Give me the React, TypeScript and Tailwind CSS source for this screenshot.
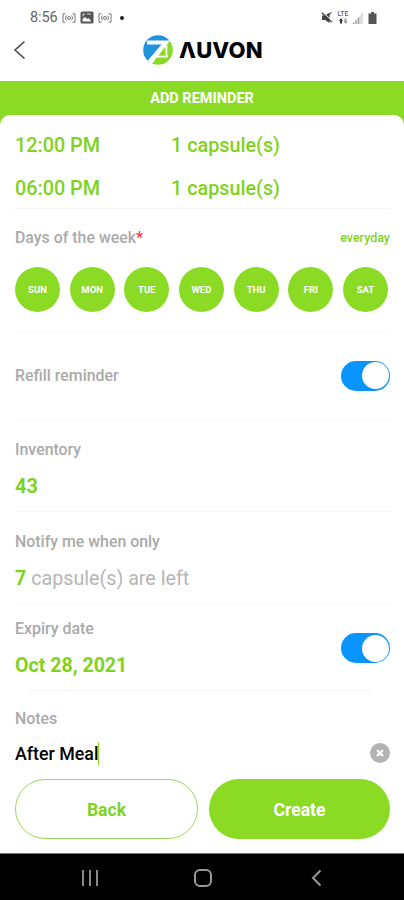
import type { ReactNode } from 'react';

const days = ['SUN', 'MON', 'TUE', 'WED', 'THU', 'FRI', 'SAT'];

const doses = [
  { time: '12:00 PM', amount: '1 capsule(s)' },
  { time: '06:00 PM', amount: '1 capsule(s)' },
];

function StatusBar() {
  return (
    <div className="flex h-[34px] items-center justify-between pl-[30px] pr-[27px] pt-[1px] text-[#666]">
      <div className="flex items-center">
        <span className="w-[28px] pt-[2px] text-[14.5px] leading-none tracking-[-0.1px]">8:56</span>
        <Broadcast className="ml-[4px]" />
        <svg className="ml-[4px]" width="14" height="13" viewBox="0 0 14 13">
          <rect x="0.5" y="0.5" width="13" height="12" rx="1.5" fill="#555" />
          <path d="M2.500 10.500V8L5 6l2 2 1.500-1 3 3.500z" fill="#fff" />
          <path d="M3 5.500V3h2M7 3h4" stroke="#ddd" fill="none" />
        </svg>
        <Broadcast className="ml-[4px]" />
        <span className="ml-[8px] size-[4px] rounded-full bg-[#222]" />
      </div>
      <div className="flex items-center">
        <svg width="12" height="13" viewBox="0 0 12 13" fill="none" stroke="#444">
          <path d="M1 4.500h3L8.500 1.500v10.500L4 9H1z" fill="#444" stroke="none" />
          <path d="M1.600 0.800l10 9.500" stroke="#fff" strokeWidth="1" />
          <path d="M0.800 1.800l10 9.500" strokeWidth="1.300" />
          <path d="M8.500 4L10.500 1" strokeWidth="1" />
        </svg>
        <div className="ml-[3px] flex w-[14px] flex-col items-center">
          <span className="text-[7px] font-medium leading-[7px]">LTE</span>
          <svg width="10" height="6" viewBox="0 0 10 6">
            <path d="M3 0l2 3H4v2.500H2V3H1z" fill="#333" />
            <path d="M7.500 6l2-3h-1V0.500h-2V3h-1z" fill="#999" />
          </svg>
        </div>
        <svg className="ml-[2px]" width="11" height="12" viewBox="0 0 11 12">
          <path d="M0 12L11 0v12z" fill="#ddd" />
          <path d="M1.500 11v1M4 8.500V12M6.500 6v6" stroke="#999" />
        </svg>
        <svg className="ml-[5px]" width="9" height="12" viewBox="0 0 9 12">
          <path d="M3 0h3v1.500h2.500V12h-8V1.500H3z" fill="#555" />
        </svg>
      </div>
    </div>
  );
}

function Broadcast({ className }: { className: string }) {
  return (
    <svg className={className} width="14" height="10" viewBox="0 0 14 10" fill="none" stroke="#777">
      <path d="M3.500 0.800H1v8.400h2.500M10.500 0.800H13v8.400h-2.500M4.500 2.500c-1.200 1.500-1.200 3.500 0 5M9.500 2.500c1.200 1.500 1.200 3.500 0 5" />
      <circle cx="7" cy="5" r="1.500" />
    </svg>
  );
}

function Header() {
  return (
    <header className="flex h-[47px] items-start pl-[13px] pt-[1px]">
      <svg className="mt-[5px]" width="13" height="20" viewBox="0 0 13 20" fill="none" stroke="#444" strokeWidth="1.500">
        <path d="M11.500 1.500L2 10l9.500 8.500" />
      </svg>
      <div className="ml-[116px] flex h-[30px] items-center">
        <svg width="32" height="30" viewBox="0 0 32 30">
          <clipPath id="disc">
            <circle cx="16" cy="15" r="14.800" />
          </clipPath>
          <g clipPath="url(#disc)">
            <path d="M0 0h32L6 30H0z" fill="#1f93dc" />
            <path d="M32 6v24H9L27 6z" fill="#8bdb24" />
            <path d="M5 5.500H28L10 28.500 5 26.500 19.500 9.500H5z" fill="#fff" />
            <path d="M24.300 10v10.500M15 21.500h11" stroke="#fff" strokeWidth="2" fill="none" />
            <path d="M23.300 13.500v7h-5.500z" fill="#8bdb24" />
          </g>
        </svg>
        <span className="ml-[5px] font-['Inter',sans-serif] text-[22px] font-extrabold leading-none tracking-[0.2px] text-black">
          ΛUVON
        </span>
      </div>
    </header>
  );
}

function Toggle() {
  return (
    <span className="flex h-[30px] w-[49px] items-center justify-end rounded-full bg-[#0a94fd] p-[1px]">
      <span className="size-[27px] rounded-full bg-white" />
    </span>
  );
}

function Label({ children }: { children: ReactNode }) {
  return <div className="text-[15.9px] font-medium leading-[20px] text-[#aaa]">{children}</div>;
}

export default function App() {
  return (
    <main className="flex h-[900px] w-[404px] flex-col overflow-hidden bg-white font-['Roboto',sans-serif]">
      <StatusBar />
      <Header />

      <div className="h-[44px] bg-[#8bdb24] pt-[7px] text-center text-[14.5px] font-bold leading-[22px] text-white">
        ADD REMINDER
      </div>

      <div className="-mt-[10px] flex flex-1 flex-col rounded-t-[10px] bg-white pl-[15px] pr-[14px]">
        {/* Doses */}
        <div className="flex h-[94px] flex-col justify-end gap-[19px] border-b border-[#f3f3f3] pb-[7px]">
          {doses.map((dose) => (
            <div key={dose.time} className="flex text-[19.8px] font-medium leading-[24px] text-[#7fd320]">
              <span className="w-[156px]">{dose.time}</span>
              <span>{dose.amount}</span>
            </div>
          ))}
        </div>

        {/* Days */}
        <div className="h-[123px] border-b border-[#f8f8f8] pt-[19px]">
          <div className="flex items-center justify-between">
            <Label>
              Days of the week<span className="text-[#ff3b3b]">*</span>
            </Label>
            <span className="text-[12.5px] font-medium leading-[20px] text-[#7fd320]">everyday</span>
          </div>
          <div className="mt-[19px] flex justify-between pr-[2px]">
            {days.map((day) => (
              <span
                key={day}
                className="flex size-[45px] items-center justify-center rounded-full bg-[#8bdb24] pt-[2px] text-[9.5px] font-bold text-white"
              >
                {day}
              </span>
            ))}
          </div>
        </div>

        {/* Refill */}
        <div className="flex h-[88px] items-center justify-between border-b border-[#f5f5f5]">
          <Label>Refill reminder</Label>
          <Toggle />
        </div>

        <div className="h-[92px] border-b border-[#f5f5f5] pt-[20px]">
          <Label>Inventory</Label>
          <div className="mt-[14px] text-[20px] font-bold leading-[24px] text-[#7fd320]">43</div>
        </div>

        <div className="h-[92px] border-b border-[#f5f5f5] pt-[20px]">
          <Label>Notify me when only</Label>
          <div className="mt-[15px] text-[19.7px] leading-[24px] text-[#b5b5b5]">
            <span className="font-bold text-[#7fd320]">7</span> capsule(s) are left
          </div>
        </div>

        <div className="flex h-[86px] items-start justify-between pt-[15px]">
          <div>
            <Label>Expiry date</Label>
            <div className="mt-[15px] text-[19.6px] font-bold leading-[24px] text-[#7fd320]">Oct 28, 2021</div>
          </div>
          <div className="pt-[14px]">
            <Toggle />
          </div>
        </div>
        <div className="ml-[13px] mr-[18px] h-px bg-[#f5f5f5]" />

        {/* Notes */}
        <div className="h-[88px] pt-[18px]">
          <Label>Notes</Label>
          <div className="mt-[12px] flex items-center justify-between">
            <div className="flex items-center text-[17.8px] font-medium leading-[22px] text-black">
              <span className="pt-[2px]">After Meal</span>
              <span className="h-[23px] w-px bg-[#8bdb24]" />
            </div>
            <svg width="20" height="20" viewBox="0 0 20 20">
              <circle cx="10" cy="10" r="10" fill="#b3b3b3" />
              <path d="M7 7l6 6M13 7l-6 6" stroke="#fff" strokeWidth="2.200" />
            </svg>
          </div>
        </div>

        <div className="flex gap-[11px] text-[17.6px] font-bold">
          <button className="h-[60px] flex-1 rounded-full border border-[#9bd85a] pt-[2px] text-[#7fd320]">Back</button>
          <button className="h-[60px] flex-1 rounded-full bg-[#8bdb24] pt-[2px] text-white">Create</button>
        </div>
      </div>

      {/* Android navigation */}
      <nav className="flex h-[47px] items-center border-t border-[#777] bg-black pl-[81px] pt-[2px]">
        <svg width="18" height="18" viewBox="0 0 18 18" stroke="#888" strokeWidth="2">
          <path d="M2 1v16M9 1v16M16 1v16" />
        </svg>
        <svg className="ml-[95px]" width="18" height="18" viewBox="0 0 18 18" fill="none" stroke="#999" strokeWidth="2">
          <rect x="1" y="1" width="16" height="16" rx="5" />
        </svg>
        <svg className="ml-[99px]" width="11" height="18" viewBox="0 0 11 18" fill="none" stroke="#999" strokeWidth="2">
          <path d="M9.500 1.500L2 9l7.500 7.500" />
        </svg>
      </nav>
    </main>
  );
}
